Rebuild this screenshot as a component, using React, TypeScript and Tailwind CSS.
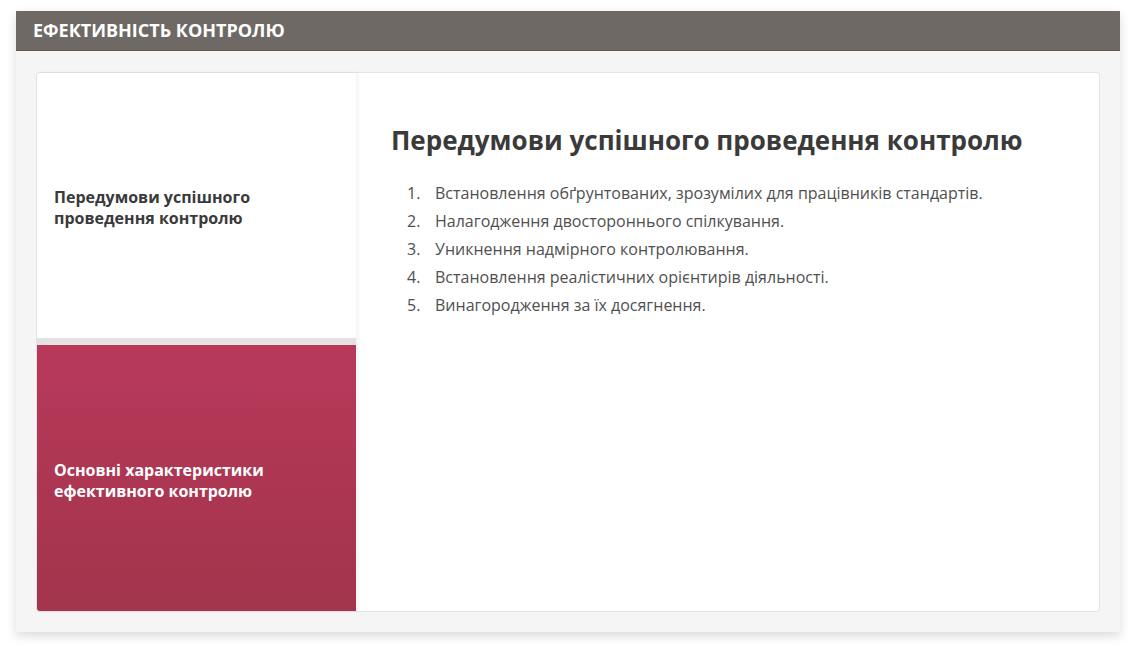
export default function App() {
  const items = [
    "Встановлення обґрунтованих, зрозумілих для працівників стандартів.",
    "Налагодження двостороннього спілкування.",
    "Уникнення надмірного контролювання.",
    "Встановлення реалістичних орієнтирів діяльності.",
    "Винагородження за їх досягнення.",
  ];
  return (
    <div className="w-[1136px] h-[653px] bg-white pt-[11px] pl-[16px]" style={{ fontFamily: '"Open Sans", "Noto Sans", sans-serif' }}>
      <div className="w-[1104px] h-[621px] bg-[#f5f5f5] shadow-[0_4px_10px_rgba(0,0,0,0.15)] flex flex-col">
        <div className="h-[40px] bg-[#6f6965] border-b border-[#5f5955] flex items-center pl-[17px]">
          <span className="text-white font-bold text-[18px] tracking-[0px]">ЕФЕКТИВНІСТЬ КОНТРОЛЮ</span>
        </div>
        <div className="flex-1 px-[20px] pt-[21px] pb-[20px]">
          <div className="h-full bg-white border border-[#e4e4e4] rounded-[3px] flex">
            <div className="w-[319px] flex flex-col bg-[#e6e6e6] shadow-[2px_0_4px_rgba(0,0,0,0.06)] z-10">
              <div className="h-[265px] bg-white flex items-center pl-[17px] rounded-tl-[3px]">
                <span className="text-[#3a3a3a] font-bold text-[16px] leading-[21px] pt-[4px]">Передумови успішного<br />проведення контролю</span>
              </div>
              <div className="h-[7px] bg-[#e2e2e2]" />
              <div className="flex-1 bg-gradient-to-b from-[#b8395a] to-[#a2344c] flex items-center pl-[17px] rounded-bl-[3px]">
                <span className="text-white font-bold text-[16px] leading-[21px] pt-[6px]">Основні характеристики<br />ефективного контролю</span>
              </div>
            </div>
            <div className="flex-1 pl-[35px] pt-[50px]">
              <h1 className="text-[#3a3a3a] font-bold text-[26px] leading-[34px] tracking-[0px]">Передумови успішного проведення контролю</h1>
              <ol className="mt-[22px] text-[#505050] text-[16px]">
                {items.map((t, i) => (
                  <li key={i} className="flex leading-[28px]">
                    <span className="w-[44px] pl-[16px]">{i + 1}.</span>
                    <span>{t}</span>
                  </li>
                ))}
              </ol>
            </div>
          </div>
        </div>
      </div>
    </div>
  );
}
